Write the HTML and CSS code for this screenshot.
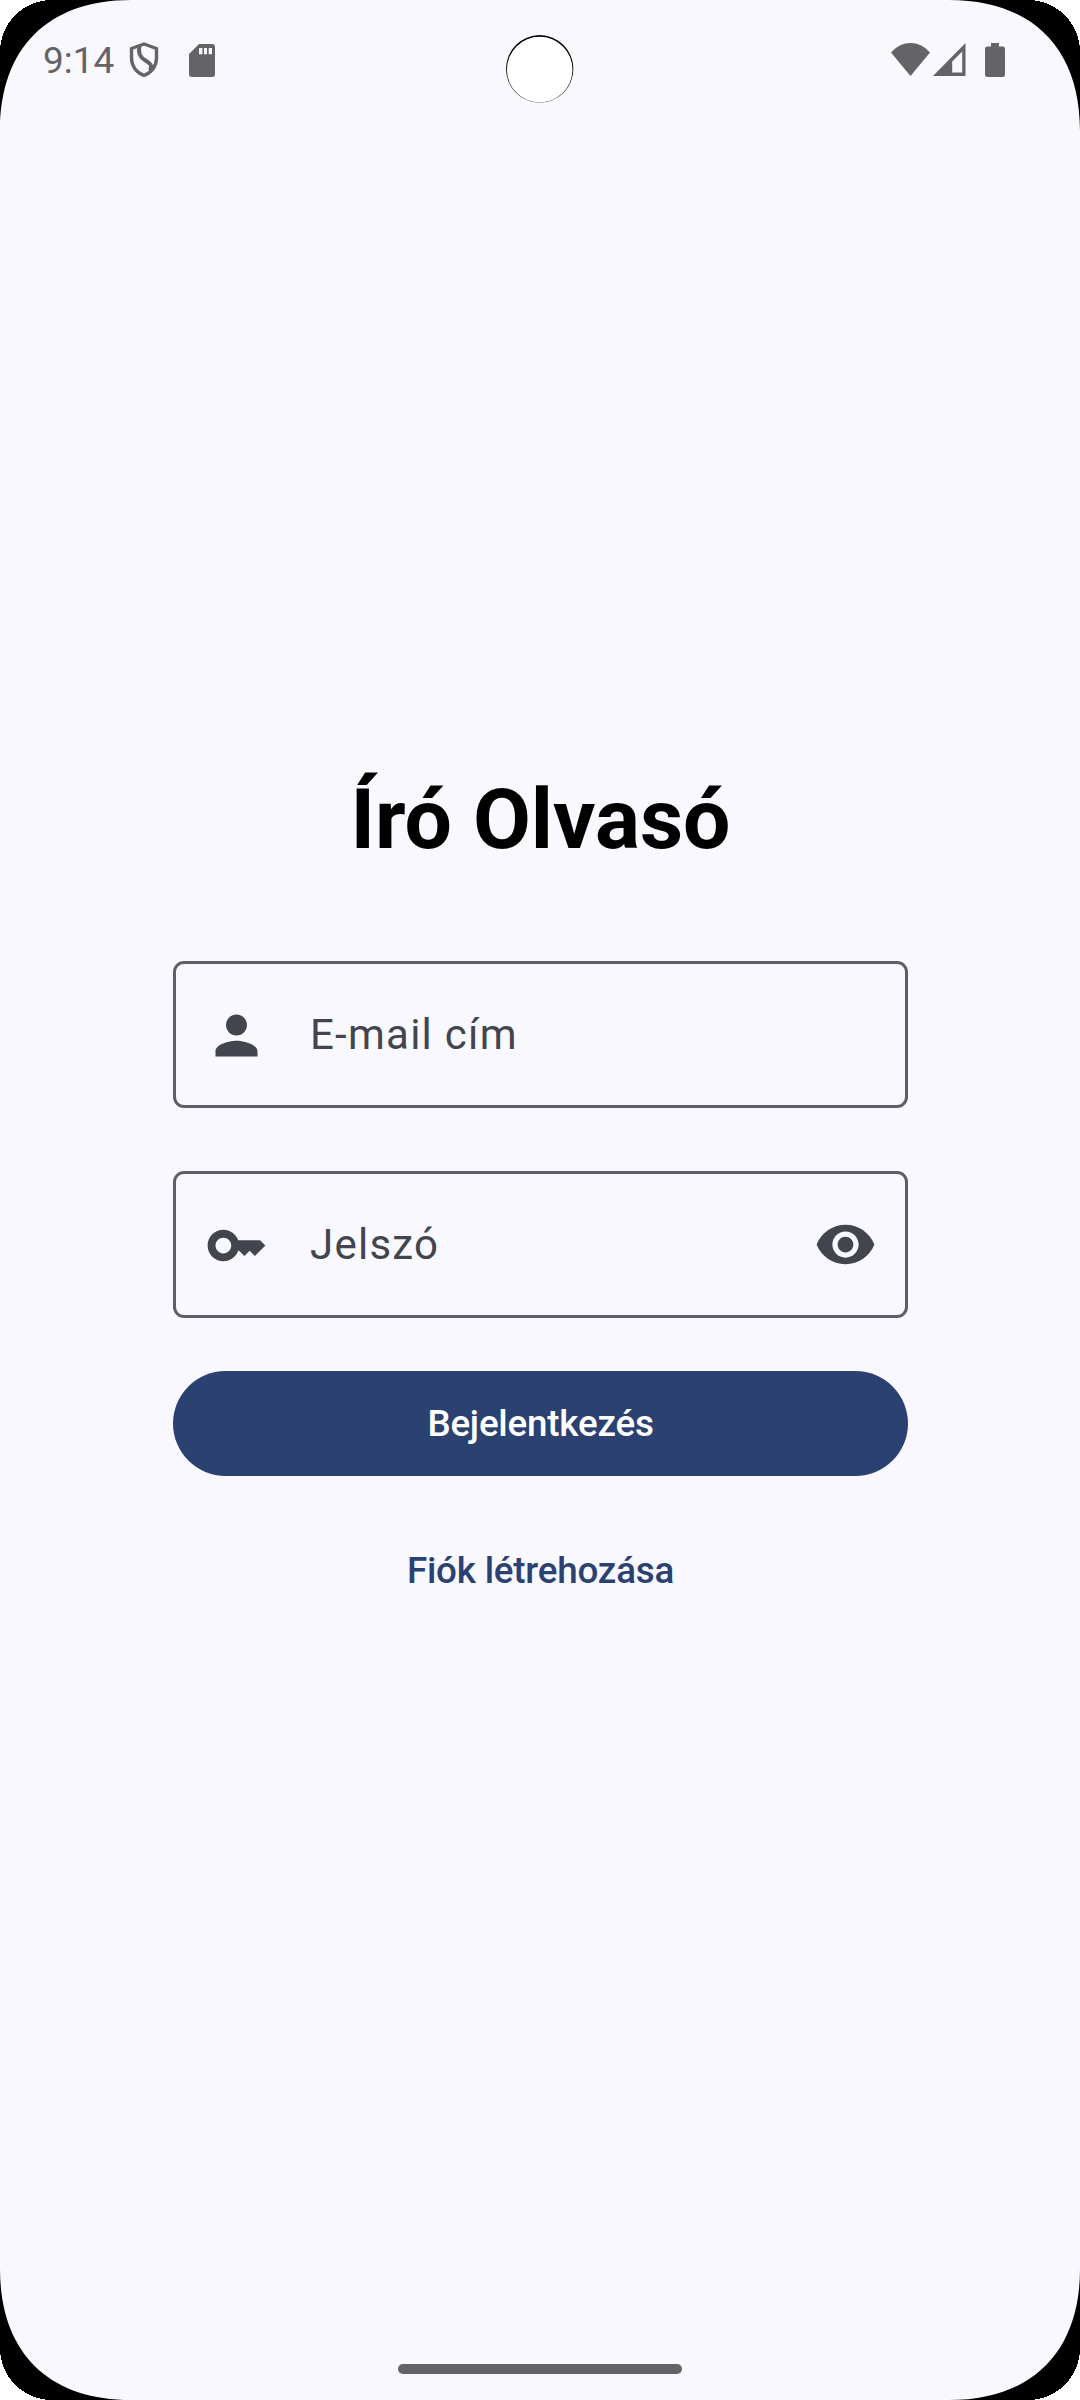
FILE: index.html
```html
<!DOCTYPE html>
<html lang="hu">
<head>
<meta charset="utf-8">
<title>Író Olvasó</title>
<link rel="stylesheet" href="styles.css">
</head>
<body>
<div class="screen">
  <header class="status-bar">
    <div class="status-left">
      <span class="clock">9:14</span>
      <svg class="icon-shield" viewBox="0 0 30 36"><path d="M15 2 27.500 6.500V16c0 8-5 14.500-12.500 17.500C7.500 30.500 2.500 24 2.500 16V6.500Z" fill="none" stroke="#646466" stroke-width="3.400" stroke-linejoin="round"/><path d="M10.500 4C8.500 12 12 16 16.500 18.500C22 21.500 23.500 24 21 28.500" fill="none" stroke="#646466" stroke-width="4"/></svg>
      <svg class="icon-sd" viewBox="0 0 26 33"><path d="M10 0H23a3 3 0 0 1 3 3V30a3 3 0 0 1-3 3H3a3 3 0 0 1-3-3V10ZM10 4V10.200H13.400V4ZM15 4V10.200H18V4ZM19.700 4V10.200H23V4Z" fill="#646466" fill-rule="evenodd"/></svg>
    </div>
    <div class="status-right">
      <svg class="icon-wifi" viewBox="0 0 39 33"><path d="M0 9.500Q8 0 19.500 0T39 9.500L19.500 33Z" fill="#646466"/></svg>
      <svg class="icon-signal" viewBox="0 0 33 33"><path d="M0 33 32.500 0V33ZM19.200 18.500V29.500H29.200V8.500Z" fill="#646466" fill-rule="evenodd"/></svg>
      <svg class="icon-battery" viewBox="0 0 20 34"><path d="M6 0H14V3.500H17.800A2.200 2.200 0 0 1 20 5.700V31.800A2.200 2.200 0 0 1 17.800 34H2.200A2.200 2.200 0 0 1 0 31.800V5.700A2.200 2.200 0 0 1 2.200 3.500H6Z" fill="#646466"/></svg>
    </div>
  </header>

  <main class="login">
    <h1 class="title">Író Olvasó</h1>
    <div class="field">
      <svg class="field-icon leading" viewBox="0 0 24 24"><path d="M12 12c2.210 0 4-1.790 4-4s-1.790-4-4-4-4 1.790-4 4 1.790 4 4 4zm0 2c-2.670 0-8 1.340-8 4v2h16v-2c0-2.660-5.330-4-8-4z"/></svg>
      <span class="label">E-mail cím</span>
    </div>
    <div class="field">
      <svg class="field-icon leading" viewBox="0 0 24 24"><path d="M21 10h-8.350C11.830 7.670 9.610 6 7 6c-3.310 0-6 2.690-6 6s2.690 6 6 6c2.610 0 4.830-1.670 5.650-4H13l2 2 2-2 2 2 4-4.040L21 10zM7 15c-1.650 0-3-1.350-3-3s1.350-3 3-3 3 1.350 3 3-1.350 3-3 3z"/></svg>
      <span class="label">Jelszó</span>
      <svg class="field-icon" viewBox="0 0 24 24"><path d="M12 4.500C7 4.500 2.730 7.610 1 12c1.730 4.390 6 7.500 11 7.500s9.270-3.110 11-7.500c-1.730-4.390-6-7.500-11-7.500zM12 17c-2.760 0-5-2.240-5-5s2.240-5 5-5 5 2.240 5 5-2.240 5-5 5zm0-8c-1.660 0-3 1.340-3 3s1.340 3 3 3 3-1.340 3-3-1.340-3-3-3z"/></svg>
    </div>
    <button class="primary" type="button">Bejelentkezés</button>
    <button class="link" type="button">Fiók létrehozása</button>
  </main>

  <footer class="nav"><div class="handle"></div></footer>

  <svg class="bezel" viewBox="0 0 1080 2400">
    <defs>
      <g id="corner">
        <path d="M0 0H131C48 0 0 48 0 131Z" fill="#000"/>
        <path d="M0 0H52A52 52 0 0 0 0 52Z" fill="#fff" shape-rendering="crispEdges"/>
      </g>
    </defs>
    <use href="#corner"/>
    <use href="#corner" transform="translate(1080 0) scale(-1 1)"/>
    <use href="#corner" transform="translate(0 2400) scale(1 -1)"/>
    <use href="#corner" transform="translate(1080 2400) scale(-1 -1)"/>
    <circle cx="539.700" cy="68.800" r="33.700" fill="#000"/>
    <circle cx="539.700" cy="69.600" r="32.800" fill="#fff"/>
  </svg>
</div>
</body>
</html>
```
FILE: styles.css
```css
* {
  box-sizing: border-box;
}

body {
  margin: 0;
  font-family: Roboto, "Noto Sans", sans-serif;
}

svg {
  display: block;
  flex: none;
}

.screen {
  position: relative;
  display: flex;
  flex-direction: column;
  width: 1080px;
  height: 2400px;
  overflow: hidden;
  background: #f9f8ff;
}

.status-bar {
  display: flex;
  justify-content: space-between;
  height: 136px;
  padding: 42px 75px 0 43px;
}

.status-left,
.status-right {
  display: flex;
  align-items: flex-start;
}

.clock {
  width: 86px;
  color: #646466;
  font-size: 37px;
  line-height: 37px;
  white-space: nowrap;
}

.icon-shield {
  width: 30px;
  height: 36px;
}

.icon-sd {
  width: 26px;
  height: 33px;
  margin: 2px 0 0 30px;
}

.icon-wifi {
  width: 39px;
  height: 33px;
  margin-top: 1px;
}

.icon-signal {
  width: 33px;
  height: 33px;
  margin: 1px 0 0 3px;
}

.icon-battery {
  width: 20px;
  height: 34px;
  margin: 1px 0 0 19px;
}

.login {
  display: flex;
  flex: 1;
  flex-direction: column;
  width: 735px;
  margin-left: 173px;
  padding-top: 634px;
}

.title {
  margin: 0 0 91px;
  color: #000;
  font-size: 84px;
  font-weight: 700;
  line-height: 100px;
  text-align: center;
}

.field {
  display: flex;
  align-items: center;
  height: 147px;
  margin-bottom: 63px;
  padding: 0 28px 0 29px;
  border: 3px solid #5c5f66;
  border-radius: 11px;
}

.field-icon {
  width: 63px;
  height: 63px;
  fill: #42454e;
}

.leading {
  margin-top: 2px;
}

.label {
  flex: 1;
  margin-left: 42px;
  color: #42454e;
  font-size: 42px;
  line-height: 63px;
  letter-spacing: 1.25px;
}

.primary,
.link {
  height: 105px;
  padding: 0;
  border: 0;
  border-radius: 53px;
  font-family: inherit;
  font-size: 36.75px;
  font-weight: 500;
  letter-spacing: -0.2px;
}

.primary {
  margin-top: -10px;
  background: #2a4172;
  color: #fff;
}

.link {
  margin-top: 42px;
  background: none;
  color: #2a4172;
}

.nav {
  display: flex;
  justify-content: center;
  height: 36px;
}

.handle {
  width: 284px;
  height: 10px;
  border-radius: 5px;
  background: #646466;
}

.bezel {
  position: absolute;
  inset: 0;
  width: 1080px;
  height: 2400px;
  pointer-events: none;
}
```
